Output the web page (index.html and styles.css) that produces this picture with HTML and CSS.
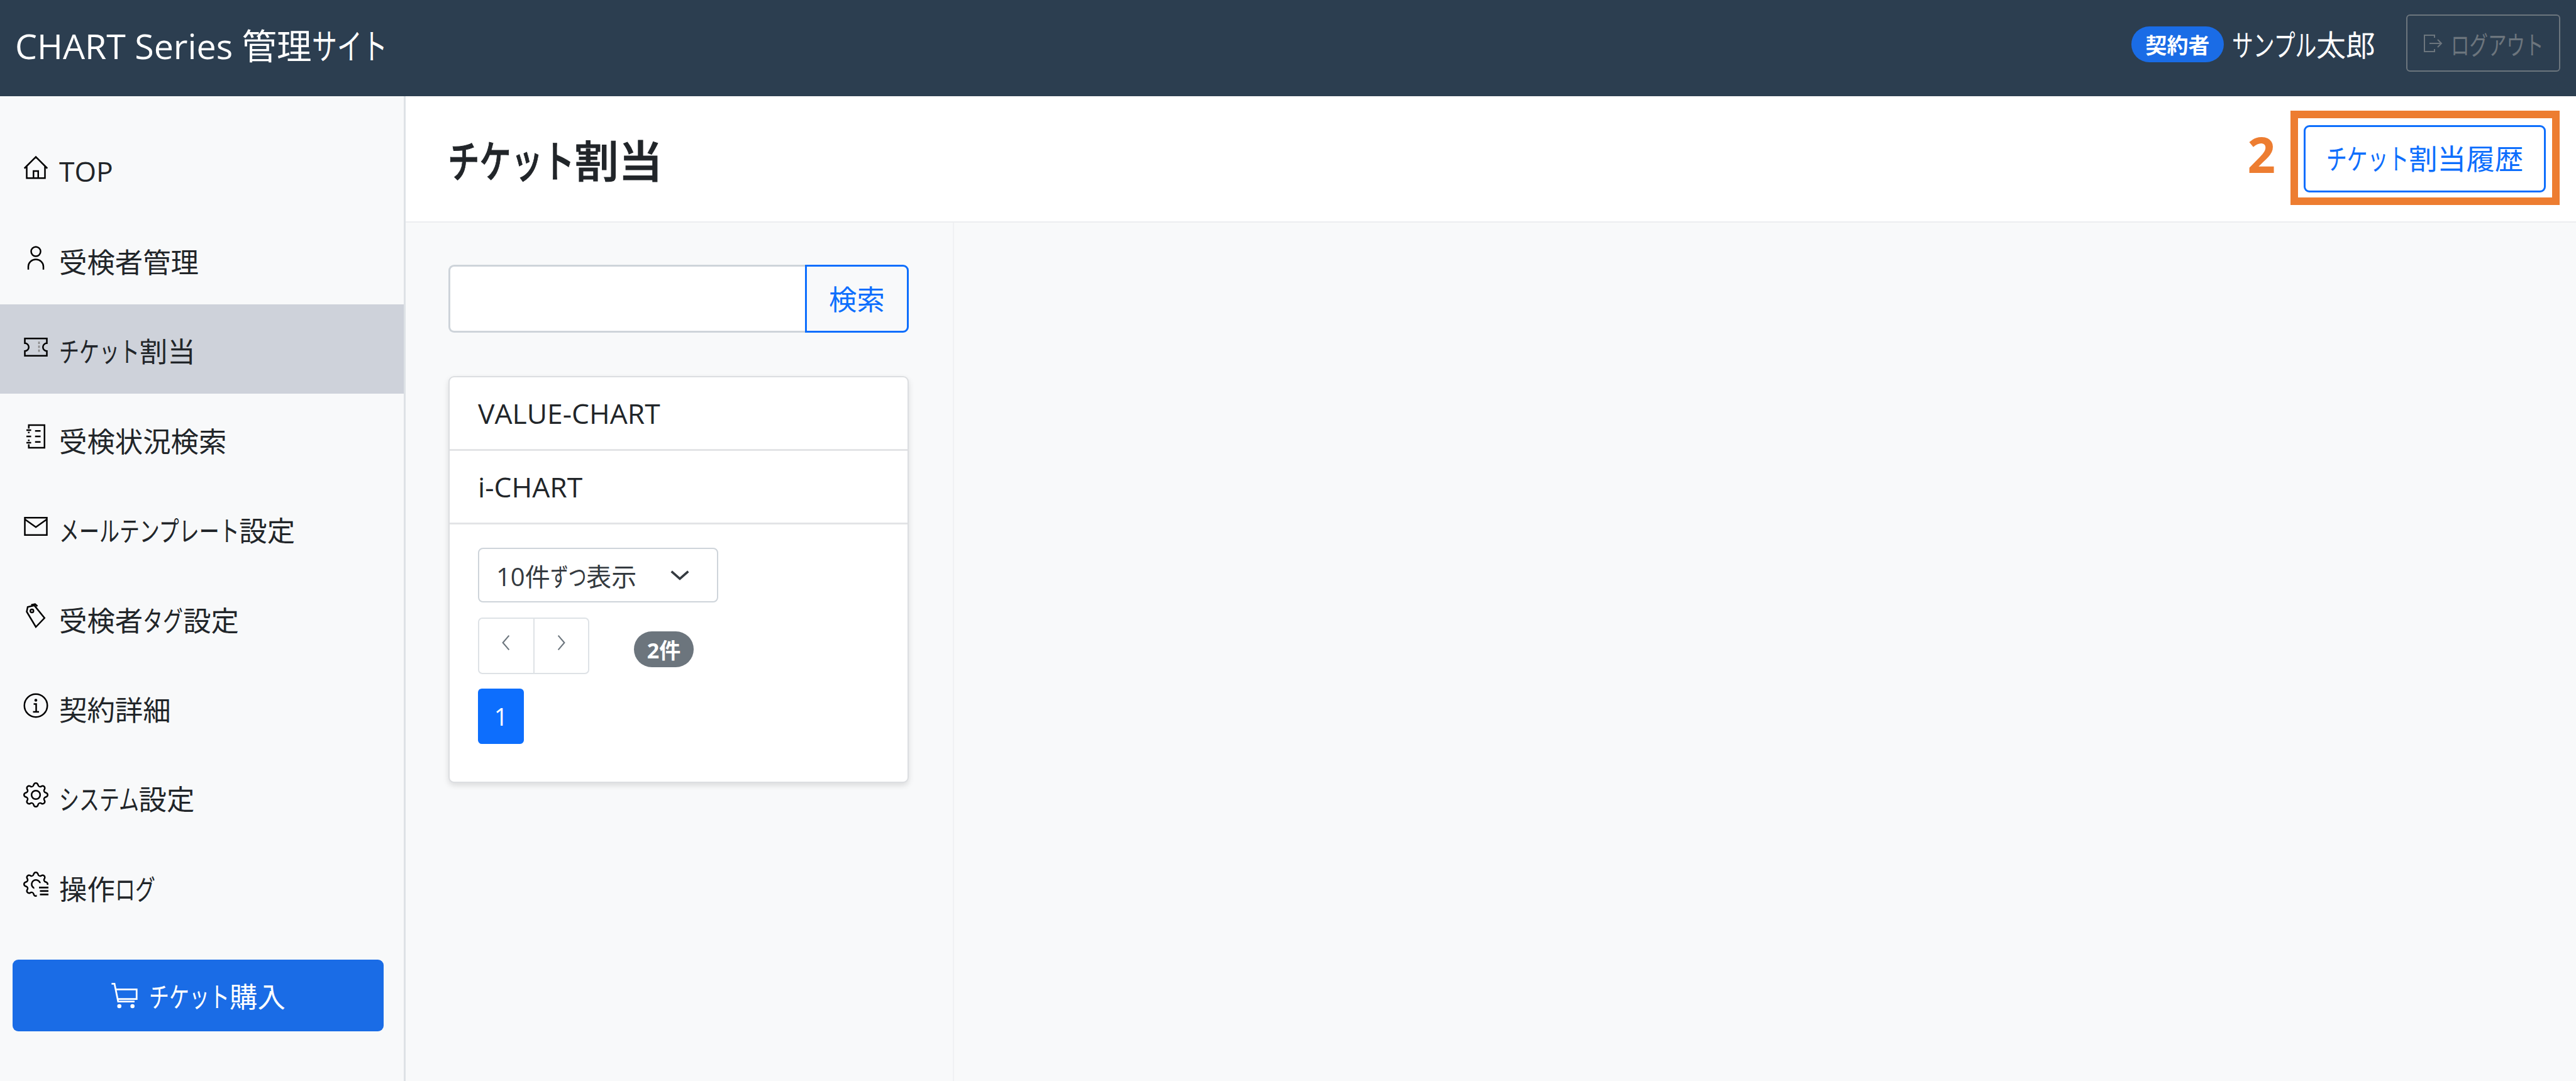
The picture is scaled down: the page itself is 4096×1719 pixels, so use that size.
FILE: index.html
```html
<!DOCTYPE html>
<html lang="ja">
<head>
  <meta charset="UTF-8" />
  <title>CHART Series 管理サイト</title>
  <link rel="stylesheet" href="styles.css">
</head>
<body>

  <header class="topbar">
    <div class="brand">CHART Series 管理<span class="kana kana-3">サイト</span></div>
    <div class="account">
      <span class="role-badge">契約者</span>
      <span class="account-name"><span class="kana kana-4">サンプル</span>太郎</span>
      <button class="logout" disabled>
        <svg class="icon logout-icon" viewBox="0 0 16 16"><path d="M9.5 3.5V1.5H1.5V14.5H9.5V12.5M5.5 8H15M12 5L15 8L12 11"/></svg>
        <span><span class="kana kana-5">ログアウト</span></span>
      </button>
    </div>
  </header>

  <div class="layout">
    <aside class="sidebar">
      <nav class="menu">
        <a class="menu-item">
          <svg class="icon" viewBox="0 0 16 16"><path d="M.7 8.3L8 1L15.3 8.3M2.2 6.8V14.5H13.8V6.8M6.5 14.5V10H9.5V14.5"/></svg>
          <span class="menu-label">TOP</span>
        </a>
        <a class="menu-item">
          <svg class="icon" viewBox="0 0 16 16"><circle cx="8" cy="4" r="3"/><path d="M3.2 15.5V13.5a4.8 4.5 0 0 1 9.6 0V15.5"/></svg>
          <span class="menu-label">受検者管理</span>
        </a>
        <a class="menu-item active">
          <svg class="icon" viewBox="0 0 16 16"><path d="M1 2.5H15V5.5a2.5 2.5 0 0 0 0 5V13.5H1V10.5a2.5 2.5 0 0 0 0-5Z"/><path class="faint" d="M10 4.5V11.5"/></svg>
          <span class="menu-label"><span class="kana kana-4">チケット</span>割当</span>
        </a>
        <a class="menu-item">
          <svg class="icon" viewBox="0 0 16 16"><path d="M3.5 3V.8H13.5V15.2H3.5V13M3.5 6V5M3.5 11V10M2 4H5M2 8H5M2 12H5M7.5 4.5H11M7.5 8H11M7.5 11.5H11"/></svg>
          <span class="menu-label">受検状況検索</span>
        </a>
        <a class="menu-item">
          <svg class="icon" viewBox="0 0 16 16"><rect x="1" y="2.5" width="14" height="11"/><path d="M1 3.5L8 8.5L15 3.5"/></svg>
          <span class="menu-label"><span class="kana kana-9">メールテンプレート</span>設定</span>
        </a>
        <a class="menu-item">
          <svg class="icon" viewBox="0 0 16 16"><path d="M2.2 5.5L2.8 2.5L7 1.5L13.5 9.5L8 15.2Z"/><path d="M5 1.2L7.5 .6L9 2"/><circle cx="5.5" cy="5" r="1"/></svg>
          <span class="menu-label">受検者<span class="kana kana-2">タグ</span>設定</span>
        </a>
        <a class="menu-item">
          <svg class="icon" viewBox="0 0 16 16"><circle cx="8" cy="8" r="7.3"/><path d="M6.6 7H8.2V11.8M6.2 12H10"/><circle class="dot" cx="8" cy="4.6" r=".9"/></svg>
          <span class="menu-label">契約詳細</span>
        </a>
        <a class="menu-item">
          <svg class="icon filled" viewBox="0 0 16 16"><path d="M8 4.754a3.246 3.246 0 1 0 0 6.492 3.246 3.246 0 0 0 0-6.492zM5.754 8a2.246 2.246 0 1 1 4.492 0 2.246 2.246 0 0 1-4.492 0z"/><path d="M9.796 1.343c-.527-1.79-3.065-1.79-3.592 0l-.094.319a.873.873 0 0 1-1.255.52l-.292-.16c-1.64-.892-3.433.902-2.54 2.541l.159.292a.873.873 0 0 1-.52 1.255l-.319.094c-1.79.527-1.79 3.065 0 3.592l.319.094a.873.873 0 0 1 .52 1.255l-.16.292c-.892 1.64.901 3.434 2.541 2.54l.292-.159a.873.873 0 0 1 1.255.52l.094.319c.527 1.79 3.065 1.79 3.592 0l.094-.319a.873.873 0 0 1 1.255-.52l.292.16c1.64.893 3.434-.902 2.54-2.541l-.159-.292a.873.873 0 0 1 .52-1.255l.319-.094c1.79-.527 1.79-3.065 0-3.592l-.319-.094a.873.873 0 0 1-.52-1.255l.16-.292c.893-1.64-.902-3.433-2.541-2.54l-.292.159a.873.873 0 0 1-1.255-.52l-.094-.319zm-2.633.283c.246-.835 1.428-.835 1.674 0l.094.319a1.873 1.873 0 0 0 2.693 1.115l.291-.16c.764-.415 1.6.42 1.184 1.185l-.159.292a1.873 1.873 0 0 0 1.116 2.692l.318.094c.835.246.835 1.428 0 1.674l-.319.094a1.873 1.873 0 0 0-1.115 2.693l.16.291c.415.764-.42 1.6-1.185 1.184l-.291-.159a1.873 1.873 0 0 0-2.693 1.116l-.094.318c-.246.835-1.428.835-1.674 0l-.094-.319a1.873 1.873 0 0 0-2.692-1.115l-.292.16c-.764.415-1.6-.42-1.184-1.185l.159-.291A1.873 1.873 0 0 0 1.945 8.93l-.319-.094c-.835-.246-.835-1.428 0-1.674l.319-.094A1.873 1.873 0 0 0 3.06 4.377l-.16-.292c-.415-.764.42-1.6 1.185-1.184l.292.159a1.873 1.873 0 0 0 2.692-1.115l.094-.319z"/></svg>
          <span class="menu-label"><span class="kana kana-4">システム</span>設定</span>
        </a>
        <a class="menu-item">
          <svg class="icon filled" viewBox="0 0 16 16"><path d="M9.796 1.343c-.527-1.79-3.065-1.79-3.592 0l-.094.319a.873.873 0 0 1-1.255.52l-.292-.16c-1.64-.892-3.433.902-2.54 2.541l.159.292a.873.873 0 0 1-.52 1.255l-.319.094c-1.79.527-1.79 3.065 0 3.592l.319.094a.873.873 0 0 1 .52 1.255l-.16.292c-.892 1.64.901 3.434 2.541 2.54l.292-.159a.873.873 0 0 1 1.255.52l.094.319c.527 1.79 3.065 1.79 3.592 0l.094-.319a.873.873 0 0 1 1.255-.52l.292.16c1.64.893 3.434-.902 2.54-2.541l-.159-.292a.873.873 0 0 1 .52-1.255l.319-.094c1.79-.527 1.79-3.065 0-3.592l-.319-.094a.873.873 0 0 1-.52-1.255l.16-.292c.893-1.64-.902-3.433-2.541-2.54l-.292.159a.873.873 0 0 1-1.255-.52l-.094-.319zm-2.633.283c.246-.835 1.428-.835 1.674 0l.094.319a1.873 1.873 0 0 0 2.693 1.115l.291-.16c.764-.415 1.6.42 1.184 1.185l-.159.292a1.873 1.873 0 0 0 1.116 2.692l.318.094c.835.246.835 1.428 0 1.674l-.319.094a1.873 1.873 0 0 0-1.115 2.693l.16.291c.415.764-.42 1.6-1.185 1.184l-.291-.159a1.873 1.873 0 0 0-2.693 1.116l-.094.318c-.246.835-1.428.835-1.674 0l-.094-.319a1.873 1.873 0 0 0-2.692-1.115l-.292.16c-.764.415-1.6-.42-1.184-1.185l.159-.291A1.873 1.873 0 0 0 1.945 8.93l-.319-.094c-.835-.246-.835-1.428 0-1.674l.319-.094A1.873 1.873 0 0 0 3.06 4.377l-.16-.292c-.415-.764.42-1.6 1.185-1.184l.292.159a1.873 1.873 0 0 0 2.692-1.115l.094-.319z"/><path d="M8 4.754a3.246 3.246 0 0 0-1 6.3V10a2.246 2.246 0 1 1 3.2-2.7h1a3.246 3.246 0 0 0-3.2-2.546z"/><rect class="cutout" x="8.6" y="8.4" width="7.4" height="7.6"/><rect x="10" y="9.6" width="6" height="1.1"/><rect x="10.6" y="11.8" width="5.4" height="1.1"/><rect x="10.6" y="14" width="5.4" height="1.1"/></svg>
          <span class="menu-label">操作<span class="kana kana-2">ログ</span></span>
        </a>
      </nav>
      <button class="buy-button">
        <svg class="icon" viewBox="0 0 16 16"><path d="M.5 1.2H2.2L4.3 11.5H13.8M3 4.5H15V10H4"/><circle class="dot" cx="5" cy="14.2" r="1.2"/><circle class="dot" cx="12.6" cy="14.2" r="1.2"/></svg>
        <span><span class="kana kana-4">チケット</span>購入</span>
      </button>
    </aside>

    <main class="content">
      <div class="page-head">
        <h1 class="page-title"><span class="kana kana-4">チケット</span>割当</h1>
        <div class="history">
          <button class="history-button"><span class="kana kana-4">チケット</span>割当履歴</button>
          <div class="callout-box"></div>
          <div class="callout-number">2</div>
        </div>
      </div>

      <div class="page-body">
        <section class="list-pane">
          <div class="search">
            <input class="search-input" type="text" />
            <button class="search-button">検索</button>
          </div>

          <div class="card">
            <div class="card-row">VALUE-CHART</div>
            <div class="card-row">i-CHART</div>
            <div class="card-foot">
              <div class="per-page">
                <span>10件<span class="kana kana-2">ずつ</span>表示</span>
                <svg class="select-arrow" viewBox="0 0 36 18"><path d="M2 2L18 16L34 2"/></svg>
              </div>
              <div class="pager-row">
                <div class="pager">
                  <div class="pager-cell"><svg class="pager-arrow" viewBox="0 0 10 16"><path d="M8 1L2 8L8 15"/></svg></div>
                  <div class="pager-cell"><svg class="pager-arrow" viewBox="0 0 10 16"><path d="M2 1L8 8L2 15"/></svg></div>
                </div>
                <span class="count-badge">2件</span>
              </div>
              <div class="page-number">1</div>
            </div>
          </div>
        </section>
        <section class="detail-pane"></section>
      </div>
    </main>
  </div>

</body>
</html>
```

FILE: styles.css
```css
* {
  box-sizing: border-box;
}

body {
  margin: 0;
  height: 1719px;
  overflow: hidden;
  display: flex;
  flex-direction: column;
  font-family: "Open Sans", "Noto Sans CJK JP", sans-serif;
  font-size: 44.4px;
  color: #212529;
  background: #f8f9fa;
}

/* kana is set much narrower than kanji in the original font */
.kana {
  display: inline-block;
  transform: scaleX(0.72);
  transform-origin: 0 50%;
  white-space: nowrap;
}

.kana-2 { margin-right: -0.56em; }
.kana-3 { margin-right: -0.84em; }
.kana-4 { margin-right: -1.12em; }
.kana-5 { margin-right: -1.4em; }
.kana-9 { margin-right: -2.52em; }

button {
  font-family: inherit;
}

.icon {
  width: 40px;
  height: 40px;
  flex: none;
  fill: none;
  stroke: #000;
  stroke-width: 1;
}

.icon .dot {
  fill: #000;
  stroke: none;
}

.icon .faint {
  stroke: #888;
  stroke-dasharray: 1.5 1;
}

.icon.filled {
  fill: #000;
  stroke: none;
}

.icon .cutout {
  fill: #f8f9fa;
}

/* top bar */
.topbar {
  height: 153px;
  flex: none;
  display: flex;
  align-items: center;
  justify-content: space-between;
  padding: 0 25px 0 24px;
  background: #2c3e50;
  color: #fff;
}

.brand {
  font-size: 55.5px;
  padding-bottom: 13px;
}

.account {
  display: flex;
  align-items: center;
  padding-bottom: 16px;
}

.role-badge {
  width: 147px;
  height: 57px;
  margin-top: 4px;
  display: flex;
  align-items: center;
  justify-content: center;
  border-radius: 29px;
  background: #1a6ce6;
  font-size: 34px;
  font-weight: 700;
}

.account-name {
  width: 290px;
  padding-left: 13px;
  font-size: 47px;
  white-space: nowrap;
}

.logout {
  width: 245px;
  height: 91px;
  display: flex;
  align-items: center;
  gap: 13px;
  padding: 0 0 0 24px;
  border: 2px solid #6c757d;
  border-radius: 6px;
  background: transparent;
  color: #6c757d;
  font-size: 41px;
  white-space: nowrap;
}

.logout-icon {
  width: 32px;
  height: 36px;
  stroke: #6c757d;
}

/* left menu */
.layout {
  flex: 1;
  display: flex;
  min-height: 0;
}

.sidebar {
  width: 645px;
  flex: none;
  padding-top: 46px;
  border-right: 3px solid #dee2e6;
  background: #f8f9fa;
}

.menu-item {
  height: 142.4px;
  display: flex;
  align-items: center;
  gap: 17px;
  padding: 0 0 6px 37px;
  color: #212529;
  white-space: nowrap;
}

.menu-item.active {
  background: #ced2da;
}

.menu-label {
  padding-top: 10px;
}

.buy-button {
  width: 590px;
  height: 114px;
  margin: 45px 0 0 20px;
  display: flex;
  align-items: center;
  justify-content: center;
  gap: 17px;
  border: none;
  border-radius: 9px;
  background: #1a6ce6;
  color: #fff;
  font-size: 44.4px;
}

.buy-button .icon {
  width: 44px;
  height: 44px;
  stroke: #fff;
}

.buy-button .icon .dot {
  fill: #fff;
}

/* page */
.content {
  flex: 1;
  display: flex;
  flex-direction: column;
  min-width: 0;
}

.page-head {
  height: 201px;
  flex: none;
  display: flex;
  align-items: center;
  justify-content: space-between;
  padding: 0 48px 0 67px;
  border-bottom: 2px solid #eceef0;
  background: #fff;
}

.page-title {
  margin: 0;
  font-size: 70px;
  font-weight: 500;
  -webkit-text-stroke: 1px #212529;
}

.history {
  position: relative;
}

.history-button {
  display: block;
  width: 385px;
  height: 107px;
  padding: 0 0 5px;
  border: 3px solid #0d6efd;
  border-radius: 9px;
  background: #fff;
  color: #0d6efd;
  font-size: 45.6px;
  white-space: nowrap;
}

.callout-box {
  position: absolute;
  top: -23px;
  right: -22px;
  bottom: -20px;
  left: -21px;
  border: 12px solid #ed7d31;
}

.callout-number {
  position: absolute;
  top: -7px;
  right: 430px;
  color: #ed7d31;
  font-size: 78px;
  font-weight: 700;
  line-height: 107px;
}

.page-body {
  flex: 1;
  display: flex;
  min-height: 0;
}

.list-pane {
  width: 872px;
  flex: none;
  padding: 67px 70px 0 68px;
  border-right: 2px solid #f0f1f3;
}

.detail-pane {
  flex: 1;
}

.search {
  height: 108px;
  display: flex;
}

.search-input {
  flex: 1;
  min-width: 0;
  border: 3px solid #ced4da;
  border-right: none;
  border-radius: 9px 0 0 9px;
  background: #fff;
}

.search-button {
  width: 165px;
  flex: none;
  padding: 0 0 3px;
  border: 3px solid #0d6efd;
  border-radius: 0 9px 9px 0;
  background: #f8f9fa;
  color: #0d6efd;
  font-size: 44.4px;
}

.card {
  margin-top: 69px;
  height: 647px;
  border: 2px solid #dcdee1;
  border-radius: 9px;
  background: #fff;
  box-shadow: 0 4px 10px rgba(0, 0, 0, 0.12);
}

.card-row {
  height: 117px;
  display: flex;
  align-items: center;
  padding-left: 45px;
  border-bottom: 3px solid #e3e4e6;
}

.card-foot {
  padding: 37px 45px 0;
}

.per-page {
  width: 382px;
  height: 87px;
  display: flex;
  align-items: center;
  justify-content: space-between;
  padding: 0 44px 0 27px;
  border: 2px solid #ced4da;
  border-radius: 8px;
  font-size: 40px;
  color: #343a40;
  white-space: nowrap;
}

.select-arrow {
  width: 30px;
  height: 17px;
  fill: none;
  stroke: #343a40;
  stroke-width: 4.5;
}

.pager-row {
  display: flex;
  align-items: center;
  margin-top: 24px;
}

.pager {
  width: 177px;
  height: 90px;
  display: flex;
  border: 2px solid #dee2e6;
  border-radius: 7px;
}

.pager-cell {
  flex: 1;
  display: flex;
  align-items: center;
  justify-content: center;
  padding-bottom: 10px;
}

.pager-cell + .pager-cell {
  border-left: 2px solid #dee2e6;
}

.pager-arrow {
  width: 17px;
  height: 26px;
  fill: none;
  stroke: #6c757d;
  stroke-width: 1.3;
}

.count-badge {
  width: 95px;
  height: 57px;
  margin: 10px 0 0 71px;
  display: flex;
  align-items: center;
  justify-content: center;
  border-radius: 29px;
  background: #6c757d;
  color: #fff;
  font-size: 34px;
  font-weight: 700;
}

.page-number {
  width: 73px;
  height: 88px;
  margin-top: 23px;
  display: flex;
  align-items: center;
  justify-content: center;
  border-radius: 6px;
  background: #0d6efd;
  color: #fff;
  font-size: 38px;
}
```
